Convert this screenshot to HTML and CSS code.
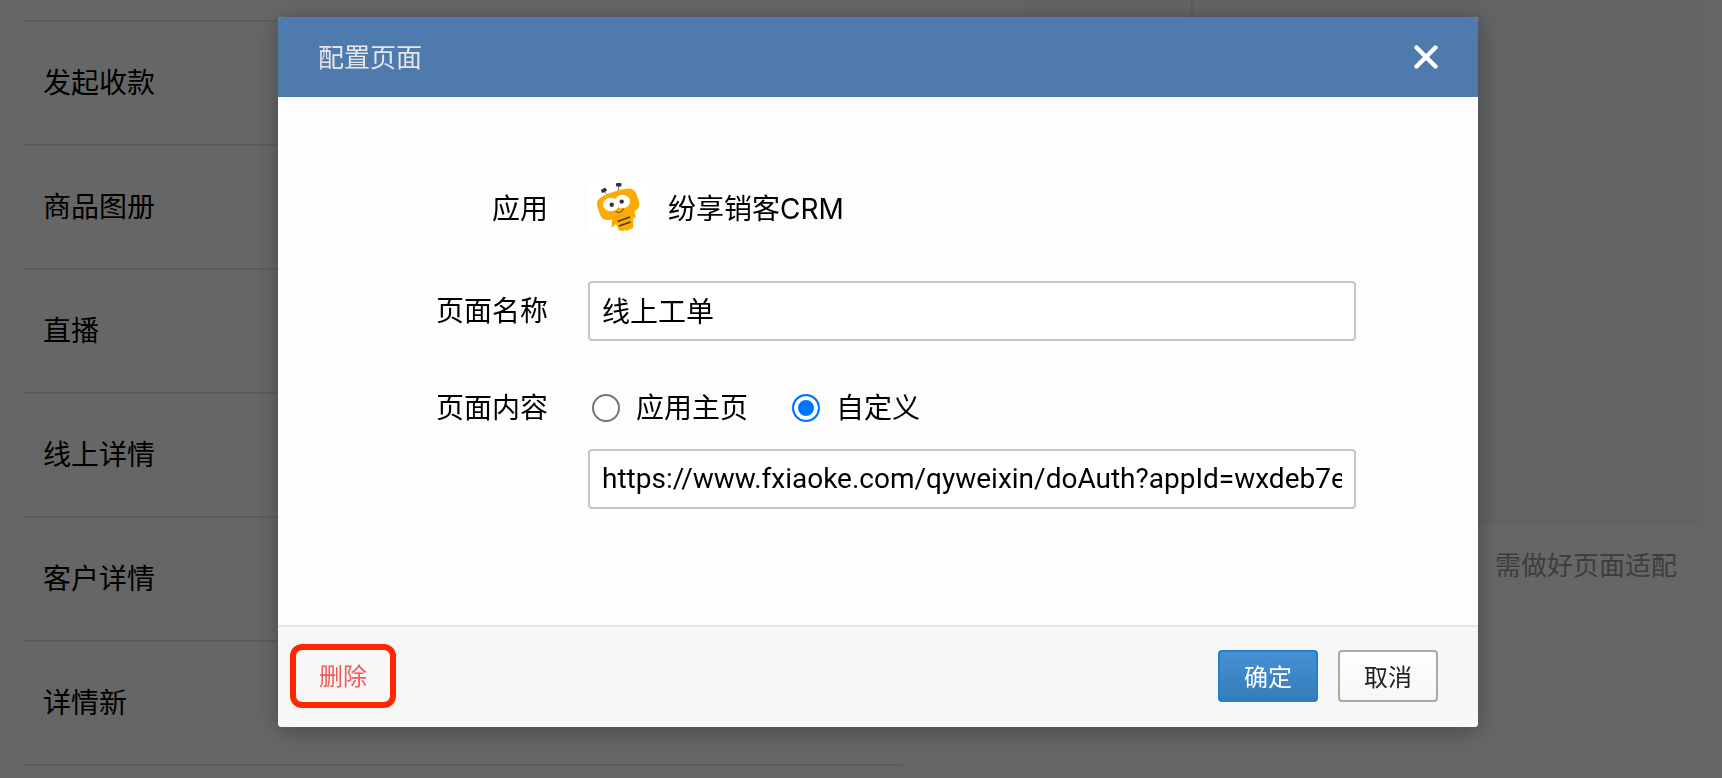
FILE: index.html
```html
<!DOCTYPE html>
<html lang="zh-CN">
<head>
  <meta charset="UTF-8">
  <meta name="viewport" content="width=device-width, initial-scale=1.0">
  <title>配置页面</title>
  <link rel="stylesheet" href="styles.css">
</head>
<body>
  <main class="page">
    <ul class="page-list">
      <li class="page-item">发起收款</li>
      <li class="page-item">商品图册</li>
      <li class="page-item">直播</li>
      <li class="page-item">线上详情</li>
      <li class="page-item">客户详情</li>
      <li class="page-item">详情新</li>
    </ul>

    <section class="preview">
      <div class="preview-box">
        <div class="preview-side"></div>
        <div class="preview-screen"></div>
      </div>
      <p class="preview-tip">需做好页面适配</p>
    </section>
  </main>

  <div class="overlay">
    <form class="dialog" role="dialog" aria-labelledby="dialogTitle">
      <header class="dialog-header">
        <h1 class="dialog-title" id="dialogTitle">配置页面</h1>
        <button type="button" class="dialog-close" aria-label="关闭">
          <svg width="24" height="24" viewBox="0 0 24 24">
            <path d="M2.5 2.5l19 19M21.5 2.5l-19 19" fill="none" stroke="#fff" stroke-width="4.4" stroke-linecap="round"/>
          </svg>
        </button>
      </header>

      <div class="dialog-body">
        <div class="form-row form-row-app">
          <span class="form-label">应用</span>
          <div class="form-field app">
            <svg class="app-logo" viewBox="0 0 60 60">
              <rect width="60" height="60" rx="8" fill="#fff"/>
              <!-- antennae -->
              <path d="M16 14l5 6M31 8l-1 8" stroke="#777" stroke-width="1" fill="none"/>
              <rect x="13" y="11.500" width="5.500" height="3.600" rx="1" fill="#333" transform="rotate(-25 16 13)"/>
              <rect x="28" y="6" width="5.500" height="3.600" rx="1" fill="#333"/>
              <!-- body -->
              <path d="M24 41L23.500 51L28 47L31 53.500L35 54L38 53L39 54L41 52.500L45 51L45.500 41L48 40.500L46.500 34L26 39Z" fill="#fbab03"/>
              <path d="M14.500 19.500Q27 13 40 11.500Q46 11 48.500 17L51 24.500Q52.500 30 48.500 33Q36 40.500 21 43Q14.500 43.500 12 38L9 28Q8 22.500 14.500 19.500Z" fill="#fbab03"/>
              <path d="M24 41Q38 37.500 46 34" stroke="#e39a05" stroke-width=".6" fill="none"/>
              <path d="M29.500 44.500L42 40M31 49L42.500 45" stroke="#4a3812" stroke-width="1.400" fill="none"/>
              <!-- eyes -->
              <ellipse cx="23" cy="27.500" rx="8" ry="6.800" fill="#fff"/>
              <ellipse cx="34.500" cy="24.500" rx="7.500" ry="6.800" fill="#fff"/>
              <circle cx="23.700" cy="27.800" r="2.200" fill="#333"/>
              <circle cx="33.700" cy="24.600" r="2.200" fill="#333"/>
              <path d="M27.500 34.500Q33.500 37.500 35.500 31.500" stroke="#5a420c" stroke-width="1" fill="none"/>
            </svg>
            <span class="app-name">纷享销客CRM</span>
          </div>
        </div>

        <div class="form-row">
          <label class="form-label" for="pageName">页面名称</label>
          <div class="form-field">
            <input type="text" class="text-input" id="pageName" value="线上工单">
          </div>
        </div>

        <div class="form-row">
          <span class="form-label form-label-radio" id="contentLabel">页面内容</span>
          <div class="form-field" role="radiogroup" aria-labelledby="contentLabel">
            <div class="radio-group">
              <label class="radio-label"><input type="radio" class="radio" name="content">应用主页</label>
              <label class="radio-label"><input type="radio" class="radio" name="content" checked>自定义</label>
            </div>
            <input type="text" class="text-input" aria-label="自定义" value="https://www.fxiaoke.com/qyweixin/doAuth?appId=wxdeb7e">
          </div>
        </div>
      </div>

      <footer class="dialog-footer">
        <button type="button" class="btn-delete">删除</button>
        <div class="actions">
          <button type="submit" class="btn btn-primary">确定</button>
          <button type="button" class="btn">取消</button>
        </div>
      </footer>
    </form>
  </div>
</body>
</html>
```

FILE: styles.css
```css
* {
  box-sizing: border-box;
}

body {
  margin: 0;
  height: 100vh;
  overflow: hidden;
  background-color: #fff;
  color: #000;
  font-family: Inter, "Noto Sans CJK SC", sans-serif;
  font-size: 28px;
  line-height: 40px;
}

button,
input {
  font-family: inherit;
}

/* Page behind the dialog */
.page {
  display: flex;
  gap: 120px;
  padding: 0 19px 0 23px;
}

.page-list {
  flex: 0 0 880px;
  margin: 20px 0 0;
  padding: 0;
  list-style: none;
  border-top: 2px solid #e6e6e6;
}

.page-item {
  padding: 41px 20px;
  border-bottom: 2px solid #e6e6e6;
}

.preview {
  flex: 1;
}

.preview-box {
  display: flex;
  height: 526px;
}

.preview-side {
  width: 170px;
  background-color: #f9f9f9;
  border-right: 2px solid #e6e6e6;
}

.preview-screen {
  flex: 1;
  background-color: #f5f7fb;
}

.preview-tip {
  margin: 20px 26px;
  color: #999;
  font-size: 26px;
  text-align: right;
}

/* Dialog */
.overlay {
  position: fixed;
  inset: 0;
  display: flex;
  justify-content: center;
  align-items: flex-start;
  padding: 17px 0 0 34px;
  background-color: rgba(0, 0, 0, 0.6);
}

.dialog {
  width: 1200px;
  max-width: 100%;
  border-radius: 4px;
  overflow: hidden;
  background-color: #fdfdfd;
  box-shadow: 0 4px 24px rgba(0, 0, 0, 0.3);
}

.dialog-header {
  display: flex;
  justify-content: space-between;
  align-items: center;
  height: 80px;
  padding: 0 40px;
  background-color: #4e7aae;
}

.dialog-title {
  margin: 0;
  padding-top: 2px;
  color: #e6e6e6;
  font-size: 26px;
  font-weight: normal;
}

.dialog-close {
  padding: 0;
  border: none;
  background: none;
  cursor: pointer;
}

.dialog-close svg {
  display: block;
}

.dialog-body {
  display: flex;
  flex-direction: column;
  gap: 44px;
  padding: 80px 122px 116px 0;
}

.form-row {
  display: flex;
  gap: 40px;
}

.form-label {
  flex: 0 0 270px;
  line-height: 60px;
  text-align: right;
}

.form-label-radio {
  line-height: 46px;
}

.form-field {
  flex: 1;
  min-width: 0;
}

.form-row-app {
  height: 60px;
}

.form-row-app .form-label,
.app-name {
  line-height: 64px;
}

.app {
  display: flex;
  align-items: flex-start;
  gap: 20px;
}

.app-logo {
  width: 60px;
  height: 60px;
}

.text-input {
  display: block;
  width: 100%;
  height: 60px;
  padding: 0 12px 2px;
  border: 2px solid #c6c6c6;
  border-radius: 4px;
  background-color: #fff;
  color: #000;
  font-family: Roboto, "Noto Sans CJK SC", sans-serif;
  font-size: 28px;
}

.radio-group {
  display: flex;
  gap: 44px;
  height: 46px;
  margin: 0 4px 18px;
}

.radio-label {
  display: flex;
  align-items: center;
  gap: 16px;
}

.radio {
  appearance: none;
  width: 28px;
  height: 28px;
  margin: 0;
  border: 2px solid #767676;
  border-radius: 50%;
  background-color: #fff;
}

.radio:checked {
  border-color: #0075ff;
  background-color: #0075ff;
  box-shadow: inset 0 0 0 4px #fff;
}

.dialog-footer {
  display: flex;
  justify-content: space-between;
  align-items: center;
  padding: 17px 40px 19px 12px;
  border-top: 2px solid #e4e6eb;
  background-color: #f7f7f7;
}

.btn-delete {
  width: 106px;
  height: 64px;
  padding: 0 0 4px;
  border: 6px solid #ff2600;
  border-radius: 12px;
  background: none;
  color: #f0595c;
  font-size: 24px;
  cursor: pointer;
}

.actions {
  display: flex;
  gap: 20px;
}

.btn {
  width: 100px;
  height: 52px;
  padding: 0 0 2px;
  border: 2px solid #a9a9a9;
  border-radius: 4px;
  background: linear-gradient(#fff, #f7f7f7);
  color: #222;
  font-size: 24px;
  cursor: pointer;
}

.btn-primary {
  border-color: #1f83cc;
  background: linear-gradient(#468fd5, #357eb8);
  color: #fff;
}
```
